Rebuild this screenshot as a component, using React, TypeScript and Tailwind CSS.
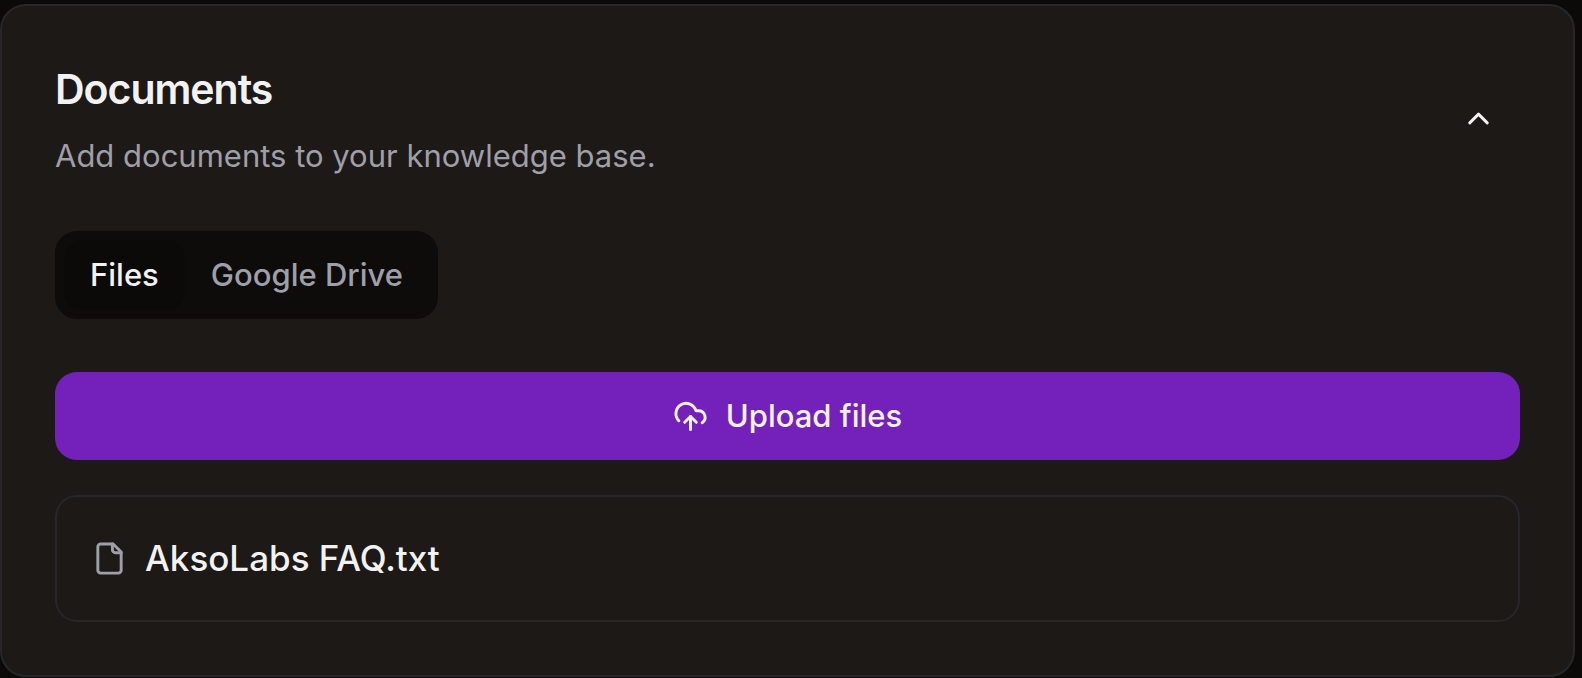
import React, { useState } from 'react';
import { ChevronUp } from 'lucide-react';

const FileIcon: React.FC = () => (
  <svg
    className="size-[35px] shrink-0 text-zinc-400"
    viewBox="0 0 24 24"
    fill="none"
    stroke="currentColor"
    strokeWidth="2"
    strokeLinecap="round"
    strokeLinejoin="round"
    aria-hidden="true"
  >
    <path d="M14.5 2H6a2 2 0 0 0-2 2v16a2 2 0 0 0 2 2h12a2 2 0 0 0 2-2V7.5L14.5 2Z" />
    <path d="M14 2v4a2 2 0 0 0 2 2h4" />
  </svg>
);

const UploadIcon: React.FC = () => (
  <svg
    className="size-[35px] shrink-0"
    viewBox="0 0 24 24"
    fill="none"
    stroke="currentColor"
    strokeWidth="2"
    strokeLinecap="round"
    strokeLinejoin="round"
    aria-hidden="true"
  >
    <path d="M4 14.899A7 7 0 1 1 15.71 8h1.79a4.5 4.5 0 0 1 2.5 8.242" />
    <path d="M12 12v9" />
    <path d="m16 16-4-4-4 4" />
  </svg>
);

const tabs = ['Files', 'Google Drive'];
const files = ['AksoLabs FAQ.txt'];

const App: React.FC = () => {
  const [activeTab, setActiveTab] = useState('Files');
  const [open, setOpen] = useState(true);

  return (
    <div className="min-h-screen bg-[#0c0a09] pt-1 pr-[7px] font-['Inter',sans-serif] text-[#f2f2f2]">
      <section className="rounded-[26px] border-2 border-zinc-800 bg-[#1c1917] p-[53px]">
        <header className="flex items-center justify-between">
          <div>
            <h2 className="text-[41px] leading-[60px] font-semibold tracking-tight">Documents</h2>
            <p className="mt-[15px] text-[31px] leading-[44px] text-zinc-400">
              Add documents to your knowledge base.
            </p>
          </div>
          <button
            type="button"
            aria-label="Toggle documents"
            aria-expanded={open}
            onClick={() => setOpen(!open)}
            className="px-6 py-4"
          >
            <ChevronUp className="size-[35px]" />
          </button>
        </header>

        {open && (
          <>
            <div role="tablist" className="mt-[53px] inline-flex rounded-[22px] bg-[#0d0c0a] p-[9px]">
              {tabs.map((tab) => (
                <button
                  key={tab}
                  type="button"
                  role="tab"
                  aria-selected={activeTab === tab}
                  onClick={() => setActiveTab(tab)}
                  className={`rounded-[18px] px-[26px] py-[13px] text-[31px] leading-[44px] font-medium ${
                    activeTab === tab ? 'bg-[#0c0a09]' : 'text-zinc-400'
                  }`}
                >
                  {tab}
                </button>
              ))}
            </div>

            <button
              type="button"
              className="mt-[53px] flex w-full items-center justify-center gap-[18px] rounded-[22px] bg-[#7421bc] py-[22px] text-[31px] leading-[44px] font-medium"
            >
              <UploadIcon />
              Upload files
            </button>

            <ul className="mt-[35px]">
              {files.map((file) => (
                <li
                  key={file}
                  className="flex items-center gap-[18px] rounded-[22px] border-2 border-zinc-800 p-[35px] text-[35px] leading-[53px] font-medium"
                >
                  <FileIcon />
                  {file}
                </li>
              ))}
            </ul>
          </>
        )}
      </section>
    </div>
  );
};

export default App;
